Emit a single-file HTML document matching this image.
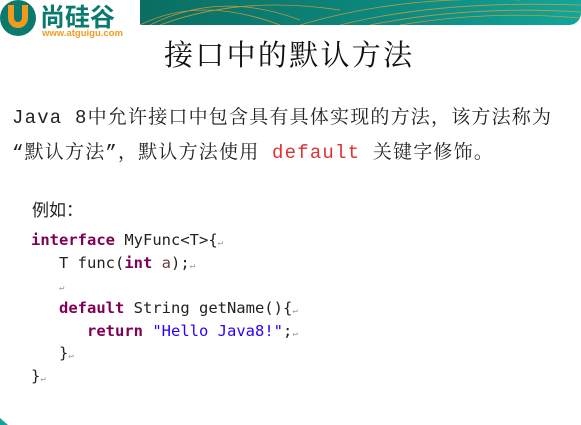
<!DOCTYPE html>
<html><head><meta charset="utf-8"><style>
body{margin:0;width:581px;height:425px;overflow:hidden;background:#fff;position:relative;font-family:"Liberation Sans","Noto Sans CJK SC",sans-serif}
.band{position:absolute;left:140px;top:0;width:441px;height:25px;background:linear-gradient(90deg,#0a6e62,#0d8a80 60%,#13a59a);border-bottom-right-radius:12px;overflow:hidden}
.logo{position:absolute;left:0;top:0}
.title{position:absolute;left:164px;top:33px;font-family:"Liberation Serif","Noto Serif CJK SC",serif;font-size:29px;color:#111;letter-spacing:2.3px}
.p{position:absolute;left:12px;font-family:"Liberation Mono","Noto Serif CJK SC",monospace;font-size:19px;letter-spacing:1.2px;color:#222;white-space:nowrap}
.code{position:absolute;left:31px;top:229px;font-family:"DejaVu Sans Mono",monospace;font-size:15.5px;color:#222;white-space:pre}
.code div{height:22.7px;line-height:22.7px}
.k{color:#7f0055;font-weight:bold}.s{color:#2a00ff}.r{color:#999;font-size:9px;font-weight:normal;line-height:10px}
</style></head><body>
<div class="band"><svg width="441" height="25"><g fill="none" stroke="#e8a030" stroke-width="0.8" opacity="0.8">
<path d="M0 25 Q60 -5 140 25"/><path d="M10 25 Q80 -10 160 20"/><path d="M20 25 Q100 -5 200 10"/><path d="M200 25 Q300 0 441 5"/><path d="M230 25 Q330 5 441 12"/><path d="M260 25 Q350 10 441 18"/><path d="M160 25 Q260 -5 380 0"/></g></svg></div>
<svg class="logo" width="150" height="40">
<circle cx="18" cy="18" r="18" fill="#0a7a6e"/>
<path d="M11 5 v13 a7 7 0 0 0 14 0 v-13" stroke="#f39a1e" stroke-width="6" fill="none"/>
<text x="40" y="26" font-family="Noto Sans CJK SC,sans-serif" font-size="25" font-weight="bold" fill="#0a7a6e">尚硅谷</text>
<text x="42" y="36" font-family="Liberation Sans,sans-serif" font-size="9.5" font-weight="bold" fill="#f39a1e">www.atguigu.com</text>
</svg>
<div class="title">接口中的默认方法</div>
<div class="p" style="top:102px">Java 8中允许接口中包含具有具体实现的方法，该方法称为</div>
<div class="p" style="top:137px">“默认方法”，默认方法使用 <span style="color:#d33">default</span> 关键字修饰。</div>
<div class="p" style="left:32px;top:196px;font-family:'Noto Sans CJK SC',sans-serif;font-size:17px;letter-spacing:0">例如：</div>
<div class="code"><div><span class="k">interface</span> MyFunc&lt;T&gt;{<span class="r">↵</span></div><div>   T func(<span class="k">int</span> <span style="color:#6a3e3e">a</span>);<span class="r">↵</span></div><div>   <span class="r">↵</span></div><div>   <span class="k">default</span> String getName(){<span class="r">↵</span></div><div>      <span class="k">return</span> <span class="s">"Hello Java8!"</span>;<span class="r">↵</span></div><div>   }<span class="r">↵</span></div><div>}<span class="r">↵</span></div></div>
<svg style="position:absolute;left:0;top:415px" width="10" height="10"><path d="M0 3 L8 10 L0 10Z" fill="#13a59a"/></svg>
</body></html>
